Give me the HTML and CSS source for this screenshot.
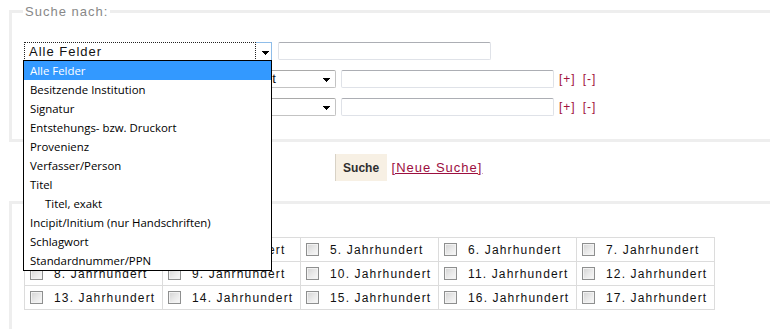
FILE: index.html
```html
<!DOCTYPE html>
<html lang="de">
<head>
<meta charset="utf-8">
<title>Suche</title>
<link rel="stylesheet" href="styles.css">
</head>
<body>
<div class="page">
  <fieldset class="box search">
    <legend class="legend">Suche nach:</legend>
    <div class="row">
      <div class="select main">
        <span class="focus-rect">Alle Felder</span>
        <span class="drop-btn"><svg class="arrow" width="7" height="4" viewBox="0 0 7 4"><path d="M0 0h7v1h-1v1h-1v1h-1v1h-1v-1h-1v-1h-1v-1h-1z" fill="#000"/></svg></span>
      </div>
      <input class="field-input" type="text">
    </div>
    <div class="row">
      <div class="select op"><svg class="arrow" width="7" height="4" viewBox="0 0 7 4"><path d="M0 0h7v1h-1v1h-1v1h-1v1h-1v-1h-1v-1h-1v-1h-1z" fill="#000"/></svg></div>
      <div class="select field"><span class="sel-text">Entstehungs- bzw. Druckort</span><svg class="arrow" width="7" height="4" viewBox="0 0 7 4"><path d="M0 0h7v1h-1v1h-1v1h-1v1h-1v-1h-1v-1h-1v-1h-1z" fill="#000"/></svg></div>
      <input class="field-input" type="text">
      <a class="mod plus" href="#">[+]</a>
      <a class="mod minus" href="#">[-]</a>
    </div>
    <div class="row last">
      <div class="select op"><svg class="arrow" width="7" height="4" viewBox="0 0 7 4"><path d="M0 0h7v1h-1v1h-1v1h-1v1h-1v-1h-1v-1h-1v-1h-1z" fill="#000"/></svg></div>
      <div class="select field"><svg class="arrow" width="7" height="4" viewBox="0 0 7 4"><path d="M0 0h7v1h-1v1h-1v1h-1v1h-1v-1h-1v-1h-1v-1h-1z" fill="#000"/></svg></div>
      <input class="field-input" type="text">
      <a class="mod plus" href="#">[+]</a>
      <a class="mod minus" href="#">[-]</a>
    </div>
  </fieldset>

  <div class="actions">
    <button class="btn" type="button">Suche</button>
    <a class="new-search" href="#">[Neue Suche]</a>
  </div>

  <fieldset class="box centuries">
    <table class="grid">
      <tr>
        <td><input type="checkbox" class="cb">3. Jahrhundert</td>
        <td><input type="checkbox" class="cb">4. Jahrhundert</td>
        <td><input type="checkbox" class="cb">5. Jahrhundert</td>
        <td><input type="checkbox" class="cb">6. Jahrhundert</td>
        <td><input type="checkbox" class="cb">7. Jahrhundert</td>
      </tr>
      <tr>
        <td><input type="checkbox" class="cb">8. Jahrhundert</td>
        <td><input type="checkbox" class="cb">9. Jahrhundert</td>
        <td><input type="checkbox" class="cb">10. Jahrhundert</td>
        <td><input type="checkbox" class="cb">11. Jahrhundert</td>
        <td><input type="checkbox" class="cb">12. Jahrhundert</td>
      </tr>
      <tr>
        <td><input type="checkbox" class="cb">13. Jahrhundert</td>
        <td><input type="checkbox" class="cb">14. Jahrhundert</td>
        <td><input type="checkbox" class="cb">15. Jahrhundert</td>
        <td><input type="checkbox" class="cb">16. Jahrhundert</td>
        <td><input type="checkbox" class="cb">17. Jahrhundert</td>
      </tr>
    </table>
  </fieldset>

  <ul class="dropdown">
    <li class="opt selected">Alle Felder</li>
    <li class="opt">Besitzende Institution</li>
    <li class="opt">Signatur</li>
    <li class="opt">Entstehungs- bzw. Druckort</li>
    <li class="opt">Provenienz</li>
    <li class="opt">Verfasser/Person</li>
    <li class="opt">Titel</li>
    <li class="opt sub">Titel, exakt</li>
    <li class="opt">Incipit/Initium (nur Handschriften)</li>
    <li class="opt">Schlagwort</li>
    <li class="opt">Standardnummer/PPN</li>
  </ul>
</div>
</body>
</html>
```

FILE: styles.css
```css
html, body {
  margin: 0;
  padding: 0;
  overflow: hidden;
  background: #fff;
}

body {
  font-family: "Liberation Sans", Arial, sans-serif;
  font-size: 12px;
  color: #111;
  letter-spacing: 1px;
}

.page {
  position: relative;
  width: 799px;
  margin-left: 9px;
  padding-top: 4px;
}

.box {
  margin: 0;
  border: 3px solid #eeeeee;
  padding: 0 12px 0 11px;
  min-width: 0;
}

.legend {
  font-size: 13px;
  line-height: 15px;
  color: #888;
  padding: 0 2px;
}

.search {
  padding-top: 23px;
  padding-bottom: 22px;
}

.row {
  display: flex;
  align-items: flex-start;
  height: 19px;
  margin-bottom: 9px;
}

.row.last {
  margin-bottom: 0;
}

.select {
  position: relative;
  box-sizing: border-box;
  height: 18px;
  background: #fff;
  border: 1px solid #c3c3c3;
  border-top-color: #a9a9a9;
  border-radius: 2px;
  font-size: 13px;
  line-height: 16px;
  white-space: nowrap;
  overflow: hidden;
  margin-right: 5px;
}

.select .sel-text {
  padding-left: 5px;
}

.select .arrow {
  position: absolute;
  right: 5px;
  top: 7px;
}

.select.op {
  width: 58px;
}

.select.field {
  width: 250px;
}

.select.main {
  display: flex;
  width: 249px;
  height: 19px;
  border: 0;
  border-radius: 0;
  overflow: visible;
  margin-right: 6px;
}

.focus-rect {
  box-sizing: border-box;
  flex: 1;
  margin-left: 1px;
  height: 19px;
  border: 1px dotted #222;
  padding-left: 4px;
  line-height: 17px;
  color: #111;
}

.drop-btn {
  position: relative;
  box-sizing: border-box;
  width: 16px;
  height: 19px;
  border: 1px solid #8fbde9;
  border-left: 0;
}

.drop-btn .arrow {
  position: absolute;
  left: 6px;
  top: 8px;
}

.field-input {
  box-sizing: border-box;
  width: 213px;
  height: 18px;
  margin: 0;
  padding: 0;
  border: 1px solid #dfe2e8;
  border-top-color: #acaeb4;
  border-radius: 2px;
  background: #fff;
}

.mod {
  font-size: 12px;
  line-height: 18px;
  color: #a0123c;
  text-decoration: none;
}

.mod.plus {
  margin-left: 5px;
}

.mod.minus {
  margin-left: 7px;
}

.actions {
  display: flex;
  justify-content: center;
  align-items: center;
  gap: 5px;
  margin-top: 12px;
  margin-bottom: 20px;
}

.btn {
  box-sizing: border-box;
  width: 52px;
  height: 27px;
  margin: 0;
  padding: 0;
  border: 0;
  border-left: 1px solid #d8d2c6;
  background: #f7f0e4;
  font-family: "Liberation Sans", Arial, sans-serif;
  font-size: 12px;
  font-weight: bold;
  letter-spacing: 0;
  color: #2e2e2e;
}

.new-search {
  font-size: 13px;
  color: #9c0f3f;
  text-decoration: underline;
}

.centuries {
  padding-top: 33px;
  padding-bottom: 40px;
}

.grid {
  margin-left: 1px;
  border-collapse: collapse;
  table-layout: fixed;
  width: 691px;
}

.grid td {
  height: 23px;
  padding: 0 0 0 5px;
  border: 1px solid #dcdcdc;
  white-space: nowrap;
  vertical-align: middle;
  line-height: 14px;
  letter-spacing: 1.15px;
}

.cb {
  appearance: none;
  -webkit-appearance: none;
  box-sizing: border-box;
  width: 13px;
  height: 13px;
  margin: 0 11px 0 0;
  vertical-align: -2px;
  border: 1px solid #8e8f8f;
  background: linear-gradient(135deg, #d3d3d3 0%, #eaeaea 55%, #f9f9f9 100%);
  box-shadow: inset 0 0 0 1px #f2f2f2;
}

.dropdown {
  position: absolute;
  left: 14px;
  top: 60px;
  box-sizing: border-box;
  width: 249px;
  margin: 0;
  padding: 0;
  list-style: none;
  background: #fff;
  border: 1px solid #000;
  font-family: "Open Sans", "Noto Sans", sans-serif;
  font-size: 11.4px;
  letter-spacing: 0;
  color: #000;
}

.opt {
  height: 19px;
  line-height: 19px;
  padding-left: 6px;
  white-space: nowrap;
}

.opt.sub {
  padding-left: 21px;
}

.opt.selected {
  background: #3399ff;
  color: #fff;
}
```
